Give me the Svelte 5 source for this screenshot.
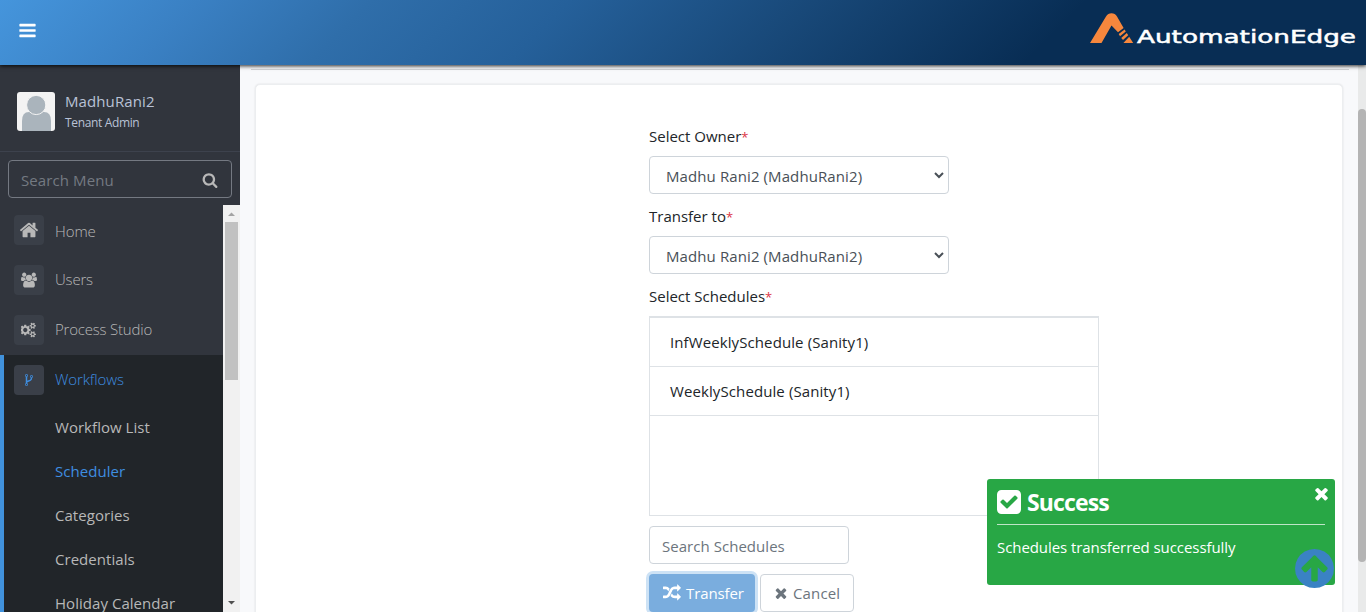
<script>
  const icons = {
    bars: { box: '0 0 1792 1792', d: 'M1664 1344v128q0 26-19 45t-45 19h-1408q-26 0-45-19t-19-45v-128q0-26 19-45t45-19h1408q26 0 45 19t19 45zm0-512v128q0 26-19 45t-45 19h-1408q-26 0-45-19t-19-45v-128q0-26 19-45t45-19h1408q26 0 45 19t19 45zm0-512v128q0 26-19 45t-45 19h-1408q-26 0-45-19t-19-45v-128q0-26 19-45t45-19h1408q26 0 45 19t19 45z' },
    home: { box: '0 0 1792 1792', d: 'M1472 992v480q0 26-19 45t-45 19h-384v-384h-256v384h-384q-26 0-45-19t-19-45v-480q0-1 .5-3t.5-3l575-474 575 474q1 2 1 6zm223-69l-62 74q-8 9-21 11h-3q-13 0-21-7l-692-577-692 577q-12 8-24 7-13-2-21-11l-62-74q-8-10-7-23.5t11-21.5l719-599q32-26 76-26t76 26l244 204v-195q0-14 9-23t23-9h192q14 0 23 9t9 23v408l219 182q10 8 11 21.5t-7 23.5z' },
    users: { box: '-64 0 1920 1792', d: 'M529 896q-162 5-265 128h-134q-82 0-138-40.5t-56-118.5q0-353 124-353 6 0 43.5 21t97.5 42.5 119 21.5q67 0 133-23-5 37-5 66 0 139 81 256zm1071 637q0 120-73 189.5t-194 69.5h-874q-121 0-194-69.5t-73-189.5q0-53 3.5-103.5t14-109 26.5-108.5 43-97.5 62-81 85.5-53.5 111.5-20q10 0 43 21.5t73 48 107 48 135 21.5 135-21.5 107-48 73-48 43-21.5q61 0 111.5 20t85.5 53.5 62 81 43 97.5 26.5 108.5 14 109 3.5 103.5zm-1024-1277q0 106-75 181t-181 75-181-75-75-181 75-181 181-75 181 75 75 181zm704 384q0 159-112.5 271.5t-271.5 112.5-271.5-112.5-112.5-271.5 112.5-271.5 271.5-112.5 271.5 112.5 112.5 271.5zm576 225q0 78-56 118.5t-138 40.5h-134q-103-123-265-128 81-117 81-256 0-29-5-66 66 23 133 23 59 0 119-21.5t97.5-42.5 43.5-21q124 0 124 353zm-128-609q0 106-75 181t-181 75-181-75-75-181 75-181 181-75 181 75 75 181z' },
    cogs: { box: '-64 0 1920 1792', d: 'M704 896q0-106-75-181t-181-75-181 75-75 181 75 181 181 75 181-75 75-181zm768 512q0-52-38-90t-90-38-90 38-38 90q0 53 37.5 90.5t90.5 37.5 90.5-37.5 37.5-90.5zm0-1024q0-52-38-90t-90-38-90 38-38 90q0 53 37.5 90.5t90.5 37.5 90.5-37.5 37.5-90.5zm-384 421v185q0 10-7 19.5t-16 10.5l-155 24q-11 35-32 76 34 48 90 115 7 11 7 20 0 12-7 19-23 30-82.5 89.5t-78.5 59.5q-11 0-21-7l-115-90q-37 19-77 31-11 108-23 155-7 24-30 24h-186q-11 0-20-7.5t-10-17.5l-23-153q-34-10-75-31l-118 89q-7 7-20 7-11 0-21-8-144-133-144-160 0-9 7-19 10-14 41-53t47-61q-23-44-35-82l-152-24q-10-1-17-9.5t-7-19.5v-185q0-10 7-19.5t16-10.5l155-24q11-35 32-76-34-48-90-115-7-11-7-20 0-12 7-20 22-30 82-89t79-59q11 0 21 7l115 90q34-18 77-32 11-108 23-154 7-24 30-24h186q11 0 20 7.5t10 17.5l23 153q34 10 75 31l118-89q8-7 20-7 11 0 21 8 144 133 144 160 0 8-7 19-12 16-42 54t-45 60q23 48 34 82l152 23q10 2 17 10.5t7 19.5zm640 533v140q0 16-149 31-12 27-30 52 51 113 51 138 0 4-4 7-122 71-124 71-8 0-46-47t-52-68q-20 2-30 2t-30-2q-14 21-52 68t-46 47q-2 0-124-71-4-3-4-7 0-25 51-138-18-25-30-52-149-15-149-31v-140q0-16 149-31 13-29 30-52-51-113-51-138 0-4 4-7 4-2 35-20t59-34 30-16q8 0 46 46.5t52 67.5q20-2 30-2t30 2q51-71 92-112l6-2q4 0 124 70 4 3 4 7 0 25-51 138 17 23 30 52 149 15 149 31zm0-1024v140q0 16-149 31-12 27-30 52 51 113 51 138 0 4-4 7-122 71-124 71-8 0-46-47t-52-68q-20 2-30 2t-30-2q-14 21-52 68t-46 47q-2 0-124-71-4-3-4-7 0-25 51-138-18-25-30-52-149-15-149-31v-140q0-16 149-31 13-29 30-52-51-113-51-138 0-4 4-7 4-2 35-20t59-34 30-16q8 0 46 46.5t52 67.5q20-2 30-2t30 2q51-71 92-112l6-2q4 0 124 70 4 3 4 7 0 25-51 138 17 23 30 52 149 15 149 31z' },
    fork: { box: '0 0 1792 1792', d: 'M672 1472q0-40-28-68t-68-28-68 28-28 68 28 68 68 28 68-28 28-68zm0-1152q0-40-28-68t-68-28-68 28-28 68 28 68 68 28 68-28 28-68zm640 128q0-40-28-68t-68-28-68 28-28 68 28 68 68 28 68-28 28-68zm96 0q0 52-26 96.5t-70 69.5q-2 287-226 414-67 38-203 81-128 40-169.5 71t-41.5 100v26q44 25 70 69.5t26 96.5q0 80-56 136t-136 56-136-56-56-136q0-52 26-96.5t70-69.5v-820q-44-25-70-69.5t-26-96.5q0-80 56-136t136-56 136 56 56 136q0 52-26 96.5t-70 69.5v497q54-26 154-57 55-17 87.5-29.5t70.5-31 59-39.5 40.5-51 28-69.5 8.5-91.5q-44-25-70-69.5t-26-96.5q0-80 56-136t136-56 136 56 56 136z' },
    search: { box: '0 0 1792 1792', d: 'M1216 832q0-185-131.5-316.5t-316.5-131.5-316.5 131.5-131.5 316.5 131.5 316.5 316.5 131.5 316.5-131.5 131.5-316.5zm512 832q0 52-38 90t-90 38q-54 0-90-38l-343-342q-179 124-399 124-143 0-273.5-55.5t-225-150-150-225-55.5-273.5 55.5-273.5 150-225 225-150 273.5-55.5 273.5 55.5 225 150 150 225 55.5 273.5q0 220-124 399l343 343q37 37 37 90z' },
    times: { box: '0 0 1792 1792', d: 'M1490 1322q0 40-28 68l-136 136q-28 28-68 28t-68-28l-294-294-294 294q-28 28-68 28t-68-28l-136-136q-28-28-28-68t28-68l294-294-294-294q-28-28-28-68t28-68l136-136q28-28 68-28t68 28l294 294 294-294q28-28 68-28t68 28l136 136q28 28 28 68t-28 68l-294 294 294 294q28 28 28 68z' },
    check: { box: '128 128 1536 1536', d: 'M813 1299l614-614q19-19 19-45t-19-45l-102-102q-19-19-45-19t-45 19l-467 467-211-211q-19-19-45-19t-45 19l-102 102q-19 19-19 45t19 45l358 358q19 19 45 19t45-19zm851-883v960q0 119-84.5 203.5t-203.5 84.5h-960q-119 0-203.5-84.5t-84.5-203.5v-960q0-119 84.5-203.5t203.5-84.5h960q119 0 203.5 84.5t84.5 203.5z' },
    up: { box: '128 128 1536 1536', d: 'M1412 895q0-27-18-45l-362-362-91-91q-18-18-45-18t-45 18l-91 91-362 362q-18 18-18 45t18 45l91 91q18 18 45 18t45-18l189-189v502q0 26 19 45t45 19h128q26 0 45-19t19-45v-502l189 189q19 19 45 19t45-19l91-91q18-18 18-45zm252 1q0 209-103 385.5t-279.5 279.5-385.5 103-385.5-103-279.5-279.5-103-385.5 103-385.5 279.5-279.5 385.5-103 385.5 103 279.5 279.5 103 385.5z' },
    random: { box: '0 0 1792 1792', d: 'M666 481q-60 92-137 273-22-45-37-72.5t-40.5-63.5-51-56.5-63-35-81.5-14.5h-224q-14 0-23-9t-9-23v-192q0-14 9-23t23-9h224q250 0 410 225zm1126 799q0 14-9 23l-320 320q-9 9-23 9-13 0-22.5-9.5t-9.5-22.5v-192q-32 0-85 .5t-81 1-73-1-71-5-64-10.5-63-18.5-58-28.5-59-40-55-53.5-56-69.5q59-93 136-273 22 45 37 72.5t40.5 63.5 51 56.5 63 35 81.5 14.5h256v-192q0-14 9-23t23-9q12 0 24 10l319 319q9 9 9 23zm0-896q0 14-9 23l-320 320q-9 9-23 9-13 0-22.5-9.5t-9.5-22.5v-192h-256q-48 0-87 15t-69 45-51 61.5-45 77.5q-32 62-78 171-29 66-49.5 111t-54 105-64 100-74 83-90 68.5-106.5 42-128 16.5h-224q-14 0-23-9t-9-23v-192q0-14 9-23t23-9h224q48 0 87-15t69-45 51-61.5 45-77.5q32-62 78-171 29-66 49.5-111t54-105 64-100 74-83 90-68.5 106.5-42 128-16.5h256v-192q0-14 9-23t23-9q12 0 24 10l319 319q9 9 9 23z' }
  };

  const menu = [
    { label: 'Home', icon: 'home', size: 20 },
    { label: 'Users', icon: 'users', size: 16 },
    { label: 'Process Studio', icon: 'cogs', size: 16 }
  ];
  const submenu = ['Workflow List', 'Scheduler', 'Categories', 'Credentials', 'Holiday Calendar'];
  const schedules = ['InfWeeklySchedule (Sanity1)', 'WeeklySchedule (Sanity1)'];
  const selects = ['Select Owner', 'Transfer to'];
</script>

{#snippet icon(name, size)}
  <svg class="icon" width={size} height={size} viewBox={icons[name].box} aria-hidden="true"><path d={icons[name].d} /></svg>
{/snippet}

<div class="app">
  <header>
    <button class="toggle" aria-label="Menu">{@render icon('bars', 19)}</button>
    <svg class="logo" width="270" height="44" viewBox="0 0 270 44">
      <path fill="#f6873d" d="M0 34 16 7.4Q18 4.2 21.5 4.2T27 7.4L33.6 19 28 23.2 21.5 16.5 11.5 34Z" />
      <path fill="#f6873d" d="M34.6 20.6 35.8 22.6 30 27.2 28.7 25ZM36.8 24 38.2 26.2 33 31 31.2 29ZM39.2 27.8 43.2 34H33.4Z" />
      <text x="47" y="34" textLength="219" lengthAdjust="spacingAndGlyphs">AutomationEdge</text>
    </svg>
  </header>

  <div class="body">
    <aside>
      <div class="profile">
        <svg width="38" height="39" viewBox="0 0 38 39">
          <rect width="38" height="39" rx="3" fill="#f3f3f3" />
          <path fill="#aab4bc" d="M5 39V29Q5 20 12 20H27Q34 20 34 29V39Z" />
          <circle cx="19.2" cy="13" r="9.6" fill="#aab4bc" stroke="#f3f3f3" />
        </svg>
        <div class="who">
          <span class="name">MadhuRani2</span>
          <span class="role">Tenant Admin</span>
        </div>
      </div>
      <div class="search"><span>Search Menu</span>{@render icon('search', 16)}</div>
      <div class="scroller">
        <nav>
          {#each menu as item}
            <div class="item"><i>{@render icon(item.icon, item.size)}</i><span>{item.label}</span></div>
          {/each}
          <div class="open">
            <div class="item active"><i>{@render icon('fork', 14)}</i><span>Workflows</span></div>
            {#each submenu as label}
              <div class="sub" class:current={label === 'Scheduler'}>{label}</div>
            {/each}
          </div>
        </nav>
        <div class="bar">
          <svg width="17" height="17"><path d="M5 11 8.5 7.5 12 11Z" fill="#a3a3a3" /></svg>
          <div class="thumb"></div>
          <svg width="17" height="17"><path d="M5 6 8.5 9.5 12 6Z" fill="#505050" /></svg>
        </div>
      </div>
    </aside>

    <main>
      <div class="edge"></div>
      <section>
        <form>
          {#each selects as label}
            <div class="label">{label}<em>*</em></div>
            <div class="select">
              <span>Madhu Rani2 (MadhuRani2)</span>
              <svg width="10" height="7" viewBox="0 0 10 7"><path d="M1 1 5 5 9 1" fill="none" stroke="#495057" stroke-width="2" /></svg>
            </div>
          {/each}
          <div class="label">Select Schedules<em>*</em></div>
          <div class="list">
            {#each schedules as s}<div class="row">{s}</div>{/each}
          </div>
          <div class="field">Search Schedules</div>
          <div class="actions">
            <button type="button" class="primary">{@render icon('random', 18)}<span>Transfer</span></button>
            <button type="button" class="plain">{@render icon('times', 16)}<span>Cancel</span></button>
          </div>
        </form>
      </section>
    </main>
    <div class="pagebar"><div></div></div>
  </div>

  <div class="toast">
    <div class="title">{@render icon('check', 24)}<strong>Success</strong></div>
    <p>Schedules transferred successfully</p>
    <button class="close" aria-label="Close">{@render icon('times', 19)}</button>
  </div>
  <button class="top" aria-label="Back to top">{@render icon('up', 39)}</button>
</div>

<style>
  :global(body) { margin: 0; overflow: hidden; }
  * { box-sizing: border-box; }
  .app { position: relative; width: 1366px; height: 612px; overflow: hidden; display: flex; flex-direction: column; background: #f8f9fb; font: 15px/24px 'Open Sans', 'Noto Sans', sans-serif; letter-spacing: 0.04px; color: #212529; }
  .icon { display: block; fill: currentColor; flex: none; }
  button { border: 0; background: none; padding: 0; font: inherit; letter-spacing: inherit; color: inherit; }
  header { position: relative; z-index: 2; height: 65px; flex: none; display: flex; justify-content: space-between; align-items: flex-start; padding: 9px 6px 0 18px; color: #fff; background: linear-gradient(135deg, #4595dc 0%, #3a80c3 14%, #2f6eaa 26%, #25609a 40%, #184878 57%, #082d54 76%); box-shadow: 0 1px 4px rgba(0, 0, 0, .85); }
  .toggle { margin-top: 12px; }
  .logo text { font: 400 18px 'DejaVu Sans', sans-serif; fill: #fff; stroke: #fff; stroke-width: .5px; letter-spacing: 0; }
  .body { flex: 1; min-height: 0; display: flex; }
  aside { width: 240px; flex: none; background: #31353d; color: #b8b8b8; display: flex; flex-direction: column; }
  .profile { height: 87px; flex: none; padding: 27px 17px 0; display: flex; gap: 10px; border-bottom: 1px solid #3d424d; }
  .who { display: flex; flex-direction: column; color: #b9c2d6; }
  .name { line-height: 18px; letter-spacing: .1px; }
  .role { font-size: 12px; line-height: 26px; letter-spacing: -.35px; }
  .search { height: 38px; flex: none; margin: 8px 8px 7px; padding: 3px 13px 0 12px; border: 1px solid #747982; border-radius: 4px; display: flex; justify-content: space-between; color: #747a82; }
  .search span { line-height: 32px; letter-spacing: .1px; }
  .search .icon { color: #b8b8b8; margin-top: 8px; }
  .scroller { flex: 1; min-height: 0; display: flex; }
  nav { flex: 1; overflow: hidden; }
  .item { height: 50px; padding: 10px 14px; display: flex; gap: 11px; font-weight: 300; letter-spacing: -.2px; }
  .item:first-child { letter-spacing: -.1px; }
  .item i { width: 30px; height: 30px; border-radius: 4px; background: #3a3f48; display: grid; place-items: center; }
  .item span { line-height: 28px; }
  nav > .item:first-child span { line-height: 32px; }
  .open { background: #212529; border-left: 4px solid #4192dc; height: 300px; }
  .open .item { padding-left: 10px; color: #3f8ee0; letter-spacing: -.1px; }
  .sub { height: 44px; padding-left: 51px; line-height: 45px; }
  .current { color: #3f8ee0; }
  .bar { width: 17px; background: #f1f1f1; display: flex; flex-direction: column; align-items: center; }
  .thumb { width: 13px; height: 158px; background: #c1c1c1; margin-bottom: auto; }
  main { flex: 1; padding: 0 15px; overflow: hidden; }
  .edge { height: 5px; margin: 0 -6px 0 -4px; border-bottom: 1px solid #d2d4d7; }
  section { margin-top: 14px; height: 560px; background: #fff; border: 1px solid #eceef0; border-radius: 5px; box-shadow: 0 0 2px rgba(0, 0, 0, .12); padding: 39px 0 0 393px; }
  form { width: 450px; }
  .label { height: 32px; line-height: 24px; letter-spacing: 0; }
  .label em { color: #dc3545; font-style: normal; font-size: 13px; }
  .select { width: 300px; height: 38px; margin-bottom: 10px; border: 1px solid #ced4da; border-radius: 4px; padding: 1px 4px 0 16px; display: flex; align-items: center; justify-content: space-between; color: #495057; letter-spacing: .1px; }
  .list { height: 200px; border: 1px solid #dee2e6; border-top-width: 2px; letter-spacing: .1px; }
  .row { height: 49px; padding-left: 20px; line-height: 49px; border-bottom: 1px solid #dee2e6; }
  .field { width: 200px; height: 38px; margin: 10px 0; padding-left: 12px; border: 1px solid #ced4da; border-radius: 4px; color: #6c757d; line-height: 39px; }
  .actions { display: flex; gap: 5px; }
  .actions button { height: 38px; border-radius: 4px; display: flex; align-items: center; }
  .primary { width: 106px; padding-left: 14px; gap: 5px; color: #fff; background: #7aadde; box-shadow: 0 0 0 3px #cde2f5; letter-spacing: -.1px; }
  .plain { width: 94px; padding-left: 12px; gap: 4px; color: #6c757d; border: 1px solid #ced4da !important; letter-spacing: .15px; }
  .pagebar { width: 8px; background: #e9eaea; padding-top: 44px; }
  .pagebar div { height: 453px; background: #b4b4b4; border-radius: 4px; }
  .toast { position: absolute; z-index: 3; left: 987px; top: 479px; width: 348px; height: 106px; padding: 0 10px; background: #28a745; color: #fff; border-radius: 3px; }
  .title { height: 46px; border-bottom: 1px solid rgba(255, 255, 255, .7); display: flex; align-items: center; gap: 6px; }
  .title strong { font-size: 23px; font-weight: 700; line-height: 40px; letter-spacing: -.85px; }
  .toast p { margin: 10px 0 0; letter-spacing: -.07px; }
  .close { position: absolute; right: 4px; top: 5px; }
  .top { position: absolute; z-index: 4; left: 1295px; top: 549px; color: #3a82c4; }
</style>
